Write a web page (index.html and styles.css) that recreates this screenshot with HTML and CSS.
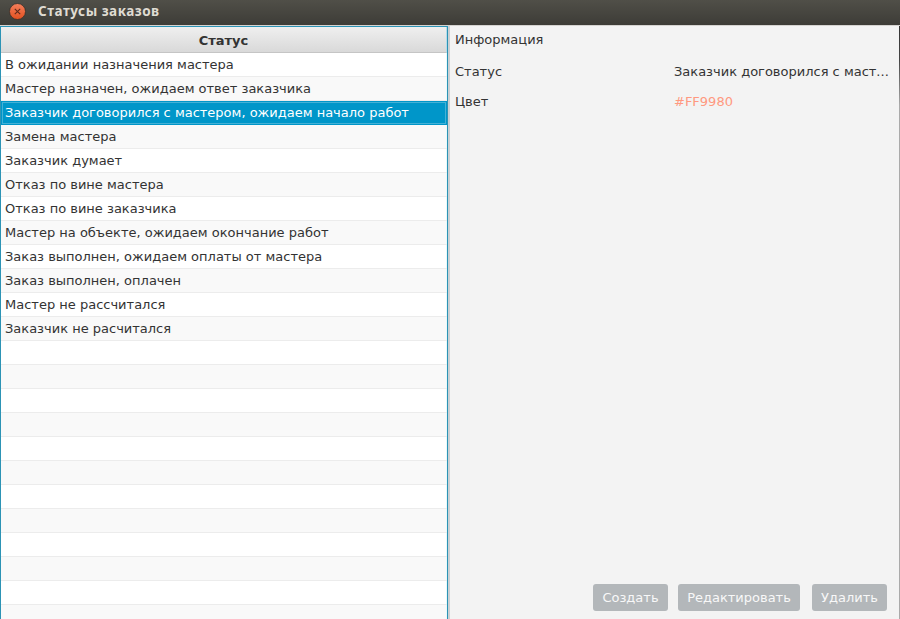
FILE: index.html
```html
<!DOCTYPE html>
<html lang="ru">
<head>
<meta charset="utf-8">
<title>Статусы заказов</title>
<link rel="stylesheet" href="styles.css">
</head>
<body>
<div class="window">
  <header class="titlebar">
    <svg class="close" width="17" height="17" viewBox="0 0 17 17">
      <defs><linearGradient id="g" x1="0" y1="0" x2="0" y2="1"><stop offset="0" stop-color="#f47f5c"/><stop offset="1" stop-color="#e2501f"/></linearGradient></defs>
      <circle cx="8.5" cy="8.5" r="8" fill="url(#g)" stroke="#34302b" stroke-width=".8"/>
      <path d="M5.8 5.8l5.4 5.4M11.2 5.8l-5.4 5.4" stroke="#5d2a1b" stroke-width="1.1"/>
    </svg>
    <h1 class="title">Статусы заказов</h1>
  </header>
  <main class="content">
    <section class="table">
      <div class="head">Статус</div>
      <ul class="rows">
        <li>В ожидании назначения мастера</li>
        <li>Мастер назначен, ожидаем ответ заказчика</li>
        <li class="selected">Заказчик договорился с мастером, ожидаем начало работ</li>
        <li>Замена мастера</li>
        <li>Заказчик думает</li>
        <li>Отказ по вине мастера</li>
        <li>Отказ по вине заказчика</li>
        <li>Мастер на объекте, ожидаем окончание работ</li>
        <li>Заказ выполнен, ожидаем оплаты от мастера</li>
        <li>Заказ выполнен, оплачен</li>
        <li>Мастер не рассчитался</li>
        <li>Заказчик не расчитался</li>
        <li></li><li></li><li></li><li></li><li></li><li></li>
        <li></li><li></li><li></li><li></li><li></li><li></li>
      </ul>
    </section>
    <section class="details">
      <h2 class="heading">Информация</h2>
      <dl class="fields">
        <dt>Статус</dt><dd>Заказчик договорился с маст...</dd>
        <dt>Цвет</dt><dd class="color">#FF9980</dd>
      </dl>
      <div class="actions">
        <button class="create">Создать</button>
        <button class="edit">Редактировать</button>
        <button class="delete">Удалить</button>
      </div>
    </section>
  </main>
</div>
</body>
</html>
```
FILE: styles.css
```css
* { box-sizing: border-box; }
body {
  margin: 0;
  overflow: hidden;
  font: 13px/24px "DejaVu Sans", sans-serif;
  color: #333;
}
.window {
  height: 619px;
  display: flex;
  flex-direction: column;
  background: #f3f3f3;
}
.titlebar {
  flex: none;
  height: 26px;
  display: flex;
  align-items: flex-start;
  gap: 12px;
  padding: 3px 0 0 9px;
  background: linear-gradient(#504f48, #3d3c37);
  border-bottom: 1px solid #d5d3d0;
}
.title {
  margin: 0;
  font: bold 13.5px/17px "Noto Sans", sans-serif;
  letter-spacing: .5px;
  color: #dfdbd2;
}
.content {
  flex: 1;
  min-height: 0;
  display: flex;
  border: solid #aaa;
  border-width: 0 1px 0 0;
  border-image: linear-gradient(#333 0, #444 35px, #aaa 80px) 1;
}
.table {
  flex: none;
  width: 448px;
  overflow: hidden;
  border: solid #2c93b5;
  border-width: 1px 1px 0;
  background: #fff;
}
.head {
  height: 26px;
  line-height: 27px;
  text-align: center;
  font-weight: bold;
  background: linear-gradient(#efefef, #d9d9d9);
  border-bottom: 1px solid #c5c5c5;
  border-right: 1px solid #b5dcea;
}
.rows { margin: 0; padding: 0; list-style: none; }
.rows li {
  height: 24px;
  padding-left: 4px;
  line-height: 23px;
  border-bottom: 1px solid #ececec;
  box-shadow: inset -1px 0 #e8fafc;
}
.rows li:nth-child(even) { background: #f9f9f9; }
.rows .selected {
  color: #fff;
  background: #0096c9;
  border-bottom-color: #0096c9;
  outline: 1px solid #45b1d6;
  outline-offset: -2px;
  box-shadow: none;
}
.details {
  flex: 1;
  min-width: 0;
  display: flex;
  flex-direction: column;
  padding: 2px 12px 8px 5px;
  border-left: 2px solid #ccd0d3;
}
.heading { margin: 0; font-size: 13px; font-weight: normal; line-height: 24px; }
.fields {
  margin: 5px 0 0;
  display: grid;
  grid-template-columns: 219px 1fr;
  grid-auto-rows: 30px;
  line-height: 30px;
  white-space: nowrap;
}
.fields dd { margin: 0; }
.fields .color { color: #ff9980; }
.actions {
  margin-top: auto;
  display: flex;
  justify-content: flex-end;
}
button {
  height: 27px;
  padding: 0;
  border: 0;
  border-radius: 3px;
  background: #b3b7ba;
  color: #f8f8f8;
  font: 13px/27px "DejaVu Sans", sans-serif;
}
.create { width: 75px; margin-right: 10px; }
.edit { width: 122px; margin-right: 12px; }
.delete { width: 75px; }
```
